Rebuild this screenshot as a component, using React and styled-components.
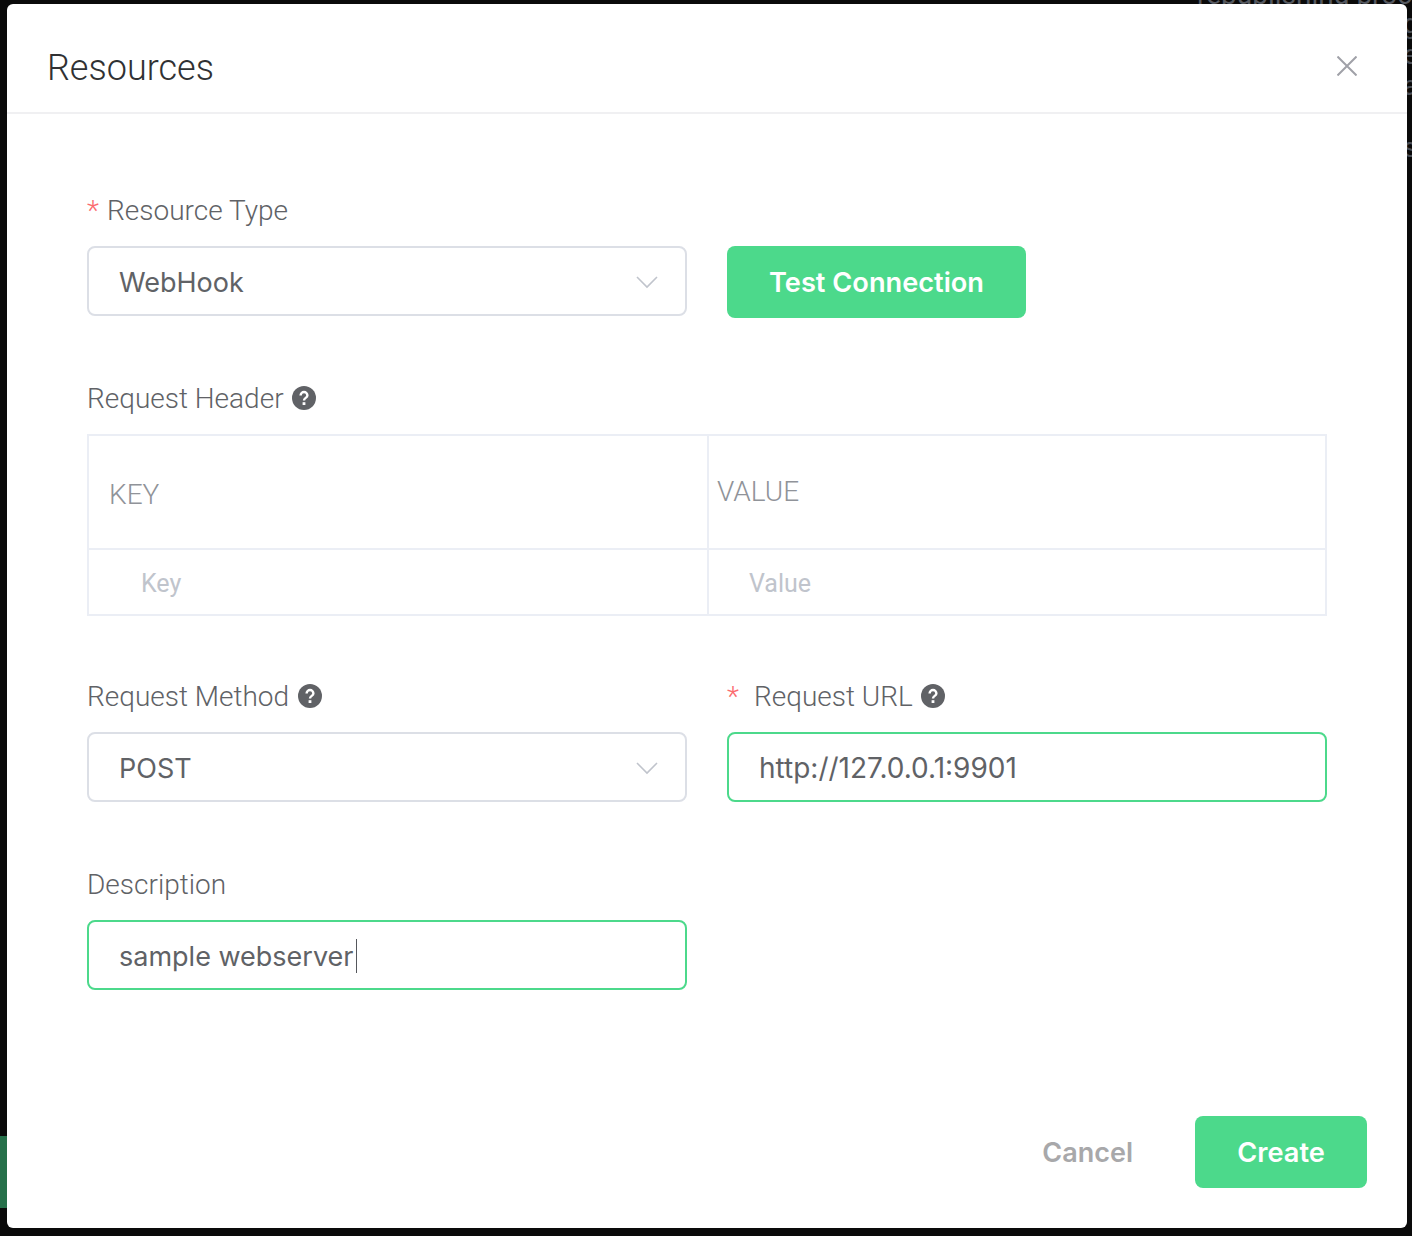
import { createGlobalStyle, styled } from "styled-components";

const GlobalStyle = createGlobalStyle`
  html, body {
    margin: 0;
    background: #0a0a0a;
  }
  body {
    font-family: Roboto, "Liberation Sans", sans-serif;
    color: #606266;
  }
`;

const Page = styled.div`
  position: relative;
  width: 1412px;
  height: 1236px;
  padding: 4px 5px 8px 7px;
  box-sizing: border-box;
  overflow: hidden;
  background: #0a0a0a;
`;

const BackdropText = styled.span`
  position: absolute;
  top: -22px;
  left: 1197px;
  font-size: 28px;
  line-height: 34px;
  white-space: nowrap;
  color: #55585f;
`;

const BackdropEdge = styled.div`
  position: absolute;
  top: 8px;
  left: 1403px;
  width: 20px;
  font-size: 28px;
  line-height: 31px;
  white-space: pre;
  color: #4a4e55;
`;

const BackdropStrip = styled.div`
  position: absolute;
  left: 0;
  top: 1136px;
  width: 7px;
  height: 72px;
  background: #26704a;
`;

const Modal = styled.div`
  position: relative;
  display: flex;
  flex-direction: column;
  width: 1400px;
  height: 1224px;
  background: #fff;
  border-radius: 6px;
`;

const Header = styled.header`
  display: flex;
  align-items: center;
  justify-content: space-between;
  height: 108px;
  padding: 0 50px 0 40px;
  border-bottom: 2px solid #f0f0f2;
`;

const Title = styled.h2`
  margin: 0;
  font-size: 36px;
  font-weight: 300;
  line-height: 44px;
  padding-top: 20px;
  color: #303133;
`;

const CloseButton = styled.button`
  display: flex;
  width: 20px;
  height: 20px;
  margin-top: 16px;
  padding: 0;
  border: 0;
  background: none;
  color: #a0a1a8;
`;

const Form = styled.div`
  display: flex;
  flex-direction: column;
  gap: 60px;
  padding: 76px 80px 0;
`;

const Row = styled.div`
  display: grid;
  grid-template-columns: ${(p) => p.$columns || "600px 600px"};
  column-gap: 40px;
`;

const Item = styled.div`
  min-width: 0;
`;

const Label = styled.div`
  display: flex;
  align-items: center;
  height: 40px;
  margin-bottom: 16px;
  font-size: 28px;
  font-weight: 300;
  color: #606266;
  white-space: nowrap;
`;

const Star = styled.span`
  width: ${(p) => p.$width || 20}px;
  color: #fb6b6f;
  font-size: 28px;
`;

const Help = styled.svg`
  width: 24px;
  height: 24px;
  margin-left: 8.5px;
  flex: none;
`;

const ControlSlot = styled.div`
  height: 72px;
`;

const Field = styled.div`
  display: flex;
  align-items: center;
  justify-content: space-between;
  width: 600px;
  height: 70px;
  padding: 2px 30px 0;
  box-sizing: border-box;
  border: 2px solid ${(p) => (p.$focused ? "#4cd98b" : "#dcdfe6")};
  border-radius: 8px;
  font-family: Inter, Roboto, sans-serif;
  font-size: ${(p) => p.$size || 27}px;
  color: #606266;
  white-space: nowrap;
`;

const TypedValue = styled.span`
  display: flex;
  align-items: center;
`;

const Caret = styled.span`
  width: 1px;
  height: 34px;
  margin-left: 3px;
  background: #55575c;
`;

const Chevron = styled.svg`
  width: 22px;
  height: 14px;
  margin-right: -3px;
  color: #c0c4cc;
`;

const PrimaryButton = styled.button`
  width: ${(p) => p.$width}px;
  height: 72px;
  padding: 0;
  border: 0;
  border-radius: 8px;
  background: #4cd98b;
  color: #fff;
  font-family: Inter, Roboto, sans-serif;
  font-size: 27.2px;
  font-weight: 600;
`;

const Table = styled.div`
  display: grid;
  grid-template-columns: 620px 1fr;
  grid-template-rows: 114px 66px;
  width: 1240px;
  height: 182px;
  box-sizing: border-box;
  border: 2px solid #ebeef5;
`;

const Cell = styled.div`
  display: flex;
  align-items: center;
  box-sizing: border-box;
  padding-left: ${(p) => p.$indent}px;
  padding-top: ${(p) => p.$down || 0}px;
  padding-bottom: ${(p) => p.$up || 0}px;
  font-size: ${(p) => (p.$head ? 28 : 25)}px;
  font-weight: ${(p) => (p.$head ? 300 : 400)};
  color: ${(p) => (p.$head ? "#909399" : "#c0c4cc")};
  border-right: ${(p) => (p.$first ? "2px solid #ebeef5" : "0")};
  border-bottom: ${(p) => (p.$head ? "2px solid #ebeef5" : "0")};
`;

const Footer = styled.footer`
  display: flex;
  align-items: center;
  justify-content: flex-end;
  gap: 62px;
  margin-top: auto;
  padding: 0 40px 40px 0;
`;

const CancelButton = styled.button`
  padding: 0;
  border: 0;
  background: none;
  color: #a8a8aa;
  font-family: Inter, Roboto, sans-serif;
  font-size: 27px;
  font-weight: 600;
`;

const HelpIcon = () => (
  <Help viewBox="0 0 24 24" aria-hidden="true">
    <circle cx="12" cy="12" r="12" fill="#606266" />
    <path
      d="M8.6 9.4a3.4 3.4 0 0 1 6.8 0c0 2.4-3.4 2.6-3.4 5"
      fill="none"
      stroke="#fff"
      strokeWidth="2.4"
    />
    <rect x="10.6" y="16.2" width="2.8" height="2.8" fill="#fff" />
  </Help>
);

const ChevronIcon = () => (
  <Chevron viewBox="0 0 22 14" aria-hidden="true">
    <path d="M1 2l10 10L21 2" fill="none" stroke="currentColor" strokeWidth="1.6" />
  </Chevron>
);

export default function App() {
  return (
    <Page>
      <GlobalStyle />
      <BackdropText>republishing proc</BackdropText>
      <BackdropEdge>{"g\ne\na\n\ns"}</BackdropEdge>
      <BackdropStrip />
      <Modal>
        <Header>
          <Title>Resources</Title>
          <CloseButton aria-label="Close">
            <svg width="20" height="20" viewBox="0 0 20 20">
              <path d="M.5.5l19 19M19.5.5l-19 19" fill="none" stroke="currentColor" strokeWidth="2" />
            </svg>
          </CloseButton>
        </Header>

        <Form>
          <Row $columns="600px 299px">
            <Item>
              <Label>
                <Star>*</Star>
                Resource Type
              </Label>
              <ControlSlot>
                <Field>
                  WebHook
                  <ChevronIcon />
                </Field>
              </ControlSlot>
            </Item>
            <Item>
              <Label />
              <PrimaryButton $width={299}>Test Connection</PrimaryButton>
            </Item>
          </Row>

          <Item>
            <Label>
              Request Header
              <HelpIcon />
            </Label>
            <Table>
              <Cell $head $first $indent={20} $down={4}>KEY</Cell>
              <Cell $head $indent={8} $up={2}>VALUE</Cell>
              <Cell $first $indent={52}>Key</Cell>
              <Cell $indent={40}>Value</Cell>
            </Table>
          </Item>

          <Row>
            <Item>
              <Label>
                Request Method
                <HelpIcon />
              </Label>
              <ControlSlot>
                <Field>
                  POST
                  <ChevronIcon />
                </Field>
              </ControlSlot>
            </Item>
            <Item>
              <Label>
                <Star $width={27}>*</Star>
                Request URL
                <HelpIcon />
              </Label>
              <ControlSlot>
                <Field $focused $size={28}>http://127.0.0.1:9901</Field>
              </ControlSlot>
            </Item>
          </Row>

          <Item>
            <Label>Description</Label>
            <ControlSlot>
              <Field $focused>
                <TypedValue>
                  sample webserver
                  <Caret />
                </TypedValue>
              </Field>
            </ControlSlot>
          </Item>
        </Form>

        <Footer>
          <CancelButton>Cancel</CancelButton>
          <PrimaryButton $width={172}>Create</PrimaryButton>
        </Footer>
      </Modal>
    </Page>
  );
}
